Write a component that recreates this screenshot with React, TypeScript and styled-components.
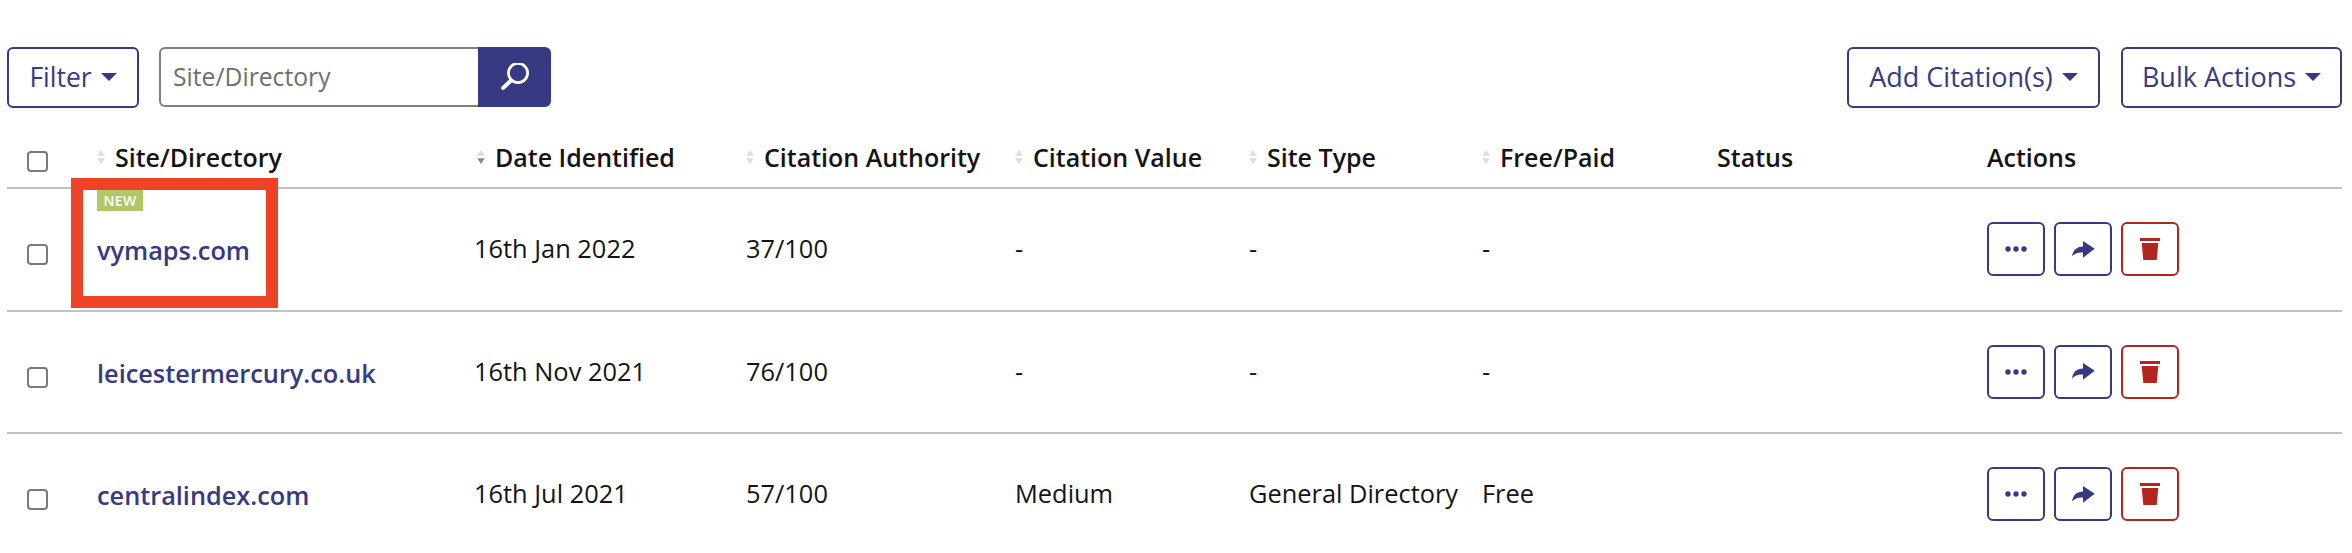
import React from 'react';
import styled, { createGlobalStyle } from 'styled-components';

const NAVY = '#373a82';
const RED = '#b3261e';

const GlobalStyle = createGlobalStyle`
  html, body {
    margin: 0;
    padding: 0;
    background: #fff;
    overflow: hidden;
  }
  body {
    font-family: "Open Sans", "Noto Sans", sans-serif;
    color: #141414;
  }
`;

const Page = styled.div`
  width: 2352px;
  height: 553px;
  padding: 47px 10px 0 7px;
  box-sizing: border-box;
  overflow: hidden;
`;

const Toolbar = styled.div`
  display: flex;
  justify-content: space-between;
  align-items: flex-start;
  height: 61px;
`;

const ToolGroup = styled.div<{ $gap: number }>`
  display: flex;
  gap: ${({ $gap }) => $gap}px;
`;

const OutlineButton = styled.button<{ $width: number; $size: number }>`
  display: flex;
  align-items: center;
  justify-content: center;
  gap: 9px;
  width: ${({ $width }) => $width}px;
  height: 61px;
  padding: 0 0 2px;
  background: #fff;
  border: 2px solid ${NAVY};
  border-radius: 6px;
  color: ${NAVY};
  font: 400 ${({ $size }) => $size}px "Open Sans", sans-serif;
`;

const Caret = styled.span`
  width: 0;
  height: 0;
  border-left: 8px solid transparent;
  border-right: 8px solid transparent;
  border-top: 8px solid ${NAVY};
`;

const SearchBox = styled.div`
  display: flex;
  height: 60px;
`;

const SearchInput = styled.input`
  width: 319px;
  height: 60px;
  box-sizing: border-box;
  padding: 0 12px 2px;
  border: 2px solid #808080;
  border-right: none;
  border-radius: 6px 0 0 6px;
  font: 400 24.7px "Open Sans", sans-serif;
  outline: none;

  &::placeholder {
    color: #6f6f6f;
    opacity: 1;
  }
`;

const SearchButton = styled.button`
  display: flex;
  align-items: center;
  justify-content: center;
  width: 73px;
  height: 60px;
  padding: 0;
  background: ${NAVY};
  border: none;
  border-radius: 0 6px 6px 0;
`;

const columns = '90px 377px 272px 269px 234px 233px 235px 270px 355px';

const HeadRow = styled.div`
  display: grid;
  grid-template-columns: ${columns};
  height: 81px;
  padding-top: 18px;
  box-sizing: border-box;
  align-items: center;
  border-bottom: 2px solid #c2c2c2;
`;

const BodyRow = styled.div`
  display: grid;
  grid-template-columns: ${columns};
  height: 122.5px;
  box-sizing: border-box;
  align-items: center;
  border-bottom: 2px solid #c2c2c2;
  font-size: 25.4px;
`;

const CheckCell = styled.div<{ $drop: number }>`
  display: flex;
  padding: ${({ $drop }) => $drop}px 0 0 20px;
`;

const Checkbox = styled.span`
  display: block;
  width: 21px;
  height: 21px;
  box-sizing: border-box;
  border: 2px solid #7a7a7a;
  border-radius: 4px;
`;

const HeadCell = styled.div<{ $indent?: number }>`
  display: flex;
  align-items: center;
  gap: 10px;
  padding-left: ${({ $indent }) => $indent ?? 0}px;
  font-size: 25px;
  font-weight: 600;
  white-space: nowrap;
`;

const SortIcon = styled.svg`
  width: 8px;
  height: 16px;
  flex: none;
`;

const Cell = styled.div`
  padding-bottom: 2px;
  white-space: nowrap;
`;

const SiteCell = styled(Cell)`
  position: relative;
  align-self: stretch;
  display: flex;
  align-items: center;
  padding: 2px 0 0;
  box-sizing: border-box;
`;

const SiteLink = styled.a`
  color: ${NAVY};
  font-weight: 600;
  font-size: 25.3px;
  text-decoration: none;
`;

const NewBadge = styled.span`
  position: absolute;
  top: 1px;
  left: 0;
  width: 46px;
  height: 21px;
  background: #aec865;
  color: #fff;
  font-size: 14px;
  font-weight: 600;
  line-height: 21px;
  text-align: center;
  letter-spacing: 0.3px;
`;

const Highlight = styled.span`
  position: absolute;
  top: -11px;
  left: -26px;
  width: 207px;
  height: 130px;
  box-sizing: border-box;
  border: 12px solid #ee4326;
`;

const ActionGroup = styled.div`
  display: flex;
  gap: 9px;
`;

const IconButton = styled.button<{ $danger?: boolean }>`
  display: flex;
  align-items: center;
  justify-content: center;
  width: 58px;
  height: 54px;
  padding: 0;
  background: #fff;
  border: 2px solid ${({ $danger }) => ($danger ? RED : NAVY)};
  border-radius: 6px;
  color: ${({ $danger }) => ($danger ? RED : NAVY)};
`;

const Sort: React.FC<{ active?: boolean }> = ({ active }) => (
  <SortIcon viewBox="0 0 8 16">
    <path d="M4 1 L7.8 6.8 H0.2 Z" fill="#dcdcdc" />
    <path d="M4 15 L7.8 9.2 H0.2 Z" fill={active ? '#8a8a8a' : '#dcdcdc'} />
  </SortIcon>
);

const MoreIcon = () => (
  <svg width="22" height="6" viewBox="0 0 22 6">
    <circle cx="3" cy="3" r="2.7" fill="currentColor" />
    <circle cx="11" cy="3" r="2.7" fill="currentColor" />
    <circle cx="19" cy="3" r="2.7" fill="currentColor" />
  </svg>
);

const ShareIcon = () => (
  <svg width="23" height="17" viewBox="0 0 23 17">
    <path
      d="M0 15.5 C1 9 5 5.5 11 5.5 V0 L22.7 7.7 L11 16.7 V11.5 C7 11 3 12 0 15.5 Z"
      fill="currentColor"
    />
  </svg>
);

const TrashIcon = () => (
  <svg width="20" height="22" viewBox="0 0 20 22">
    <rect x="0" y="0" width="20" height="3" fill="currentColor" />
    <path d="M1.7 5 H18.3 L16.7 22 H3.3 Z" fill="currentColor" />
  </svg>
);

const SearchIcon = () => (
  <svg width="29" height="29" viewBox="0 0 29 29" fill="none" stroke="#fff">
    <circle cx="18" cy="10" r="9.6" strokeWidth="2.8" />
    <path d="M10.5 18 L3 25" strokeWidth="4" strokeLinecap="round" />
  </svg>
);

const headers = [
  { label: 'Site/Directory', sortable: true },
  { label: 'Date Identified', sortable: true, active: true, indent: 3 },
  { label: 'Citation Authority', sortable: true },
  { label: 'Citation Value', sortable: true },
  { label: 'Site Type', sortable: true },
  { label: 'Free/Paid', sortable: true },
  { label: 'Status', sortable: false },
  { label: 'Actions', sortable: false },
];

const rows = [
  { site: 'vymaps.com', date: '16th Jan 2022', authority: '37/100', value: '-', type: '-', price: '-', isNew: true },
  { site: 'leicestermercury.co.uk', date: '16th Nov 2021', authority: '76/100', value: '-', type: '-', price: '-' },
  { site: 'centralindex.com', date: '16th Jul 2021', authority: '57/100', value: 'Medium', type: 'General Directory', price: 'Free' },
];

const App: React.FC = () => (
  <Page>
    <GlobalStyle />
    <Toolbar>
      <ToolGroup $gap={20}>
        <OutlineButton $width={132} $size={26.5}>
          Filter <Caret />
        </OutlineButton>
        <SearchBox>
          <SearchInput placeholder="Site/Directory" readOnly />
          <SearchButton aria-label="Search">
            <SearchIcon />
          </SearchButton>
        </SearchBox>
      </ToolGroup>
      <ToolGroup $gap={21}>
        <OutlineButton $width={253} $size={27}>
          Add Citation(s) <Caret />
        </OutlineButton>
        <OutlineButton $width={221} $size={27}>
          Bulk Actions <Caret />
        </OutlineButton>
      </ToolGroup>
    </Toolbar>

    <HeadRow>
      <CheckCell $drop={10}>
        <Checkbox />
      </CheckCell>
      {headers.map((h) => (
        <HeadCell key={h.label} $indent={h.indent}>
          {h.sortable && <Sort active={h.active} />}
          {h.label}
        </HeadCell>
      ))}
    </HeadRow>

    {rows.map((r) => (
      <BodyRow key={r.site}>
        <CheckCell $drop={11}>
          <Checkbox />
        </CheckCell>
        <SiteCell>
          {r.isNew && <NewBadge>NEW</NewBadge>}
          <SiteLink href="#">{r.site}</SiteLink>
          {r.isNew && <Highlight />}
        </SiteCell>
        <Cell>{r.date}</Cell>
        <Cell>{r.authority}</Cell>
        <Cell>{r.value}</Cell>
        <Cell>{r.type}</Cell>
        <Cell>{r.price}</Cell>
        <Cell />
        <ActionGroup>
          <IconButton aria-label="More">
            <MoreIcon />
          </IconButton>
          <IconButton aria-label="Share">
            <ShareIcon />
          </IconButton>
          <IconButton $danger aria-label="Delete">
            <TrashIcon />
          </IconButton>
        </ActionGroup>
      </BodyRow>
    ))}
  </Page>
);

export default App;
